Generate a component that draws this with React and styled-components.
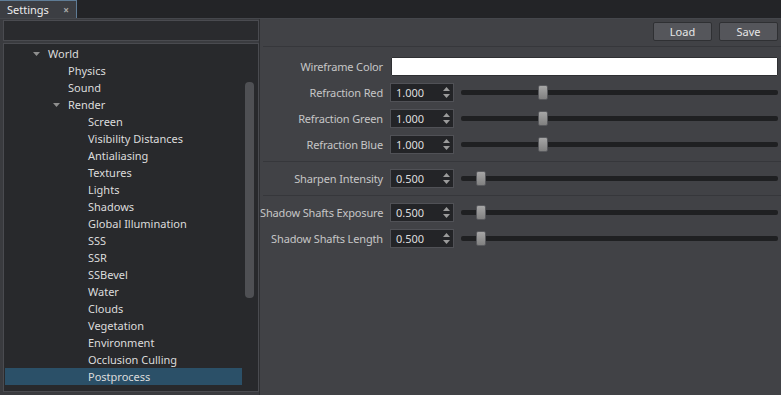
import React from "react";
import styled, { createGlobalStyle } from "styled-components";

const Global = createGlobalStyle`
  html, body { margin: 0; padding: 0; background: #3a3b3f; }
  body { font-family: "Noto Sans", "DejaVu Sans", sans-serif; font-size: 11px; }
  * { box-sizing: border-box; }
`;

const Window = styled.div`
  width: 781px;
  height: 395px;
  display: flex;
  flex-direction: column;
  background: #3a3b3f;
  overflow: hidden;
`;

const TabBar = styled.div`
  height: 18px;
  flex: none;
  display: flex;
  background: #232427;
`;

const Tab = styled.div`
  width: 77px;
  height: 18px;
  display: flex;
  align-items: center;
  justify-content: space-between;
  padding: 0 7px 0 7px;
  background: #3c3e43;
  border-top: 1px solid #5f7c96;
  border-right: 1px solid #5f7c96;
  color: #ececec;
  font-size: 11px;
`;

const Close = styled.span`
  color: #a8a8a8;
  font-size: 10px;
  font-weight: bold;
`;

const Body = styled.div`
  flex: 1;
  display: flex;
  min-height: 0;
  border-top: 1px solid #45474c;
`;

const Left = styled.div`
  width: 259px;
  flex: none;
  display: flex;
  flex-direction: column;
  gap: 2px;
  padding: 1px 0 3px 3px;
  background: #3a3b3f;
`;

const Search = styled.div`
  height: 21px;
  flex: none;
  background: #2a2b2e;
  border: 1px solid #4a4b50;
`;

const Tree = styled.div`
  flex: 1;
  position: relative;
  background: #28292c;
  border: 1px solid #4a4b50;
  padding: 1px 16px 0 1px;
`;

const Row = styled.div`
  height: 17px;
  display: flex;
  align-items: center;
  padding-left: ${(p) => p.$indent}px;
  background: ${(p) => (p.$selected ? "#2b5068" : "transparent")};
  color: #dcdcdc;
  white-space: nowrap;
`;

const Arrow = styled.span`
  width: 15px;
  display: flex;
  justify-content: flex-start;
`;

const Scroll = styled.div`
  position: absolute;
  right: 4px;
  top: 38px;
  width: 9px;
  height: 216px;
  border-radius: 4px;
  background: #4f5054;
`;

const Right = styled.div`
  flex: 1;
  display: flex;
  flex-direction: column;
  background: #414246;
  border-left: 1px solid #2e2f32;
`;

const Toolbar = styled.div`
  height: 28px;
  flex: none;
  display: flex;
  justify-content: flex-end;
  align-items: flex-start;
  gap: 7px;
  padding: 3px 3px 0 0;
  margin-left: 3px;
  border-bottom: 1px solid #36373b;
`;

const Button = styled.button`
  width: 59px;
  height: 19px;
  padding: 0;
  background: #55565b;
  border: 1px solid #2f3033;
  border-radius: 2px;
  color: #e6e6e6;
  font-family: inherit;
  font-size: 11px;
`;

const Props = styled.div`
  display: flex;
  flex-direction: column;
  gap: 7px;
  padding: 10px 3px 0 0;
`;

const PropRow = styled.div`
  height: 19px;
  display: grid;
  grid-template-columns: 123px 64px 1fr;
  column-gap: 7px;
  align-items: center;
`;

const WideRow = styled(PropRow)`
  grid-template-columns: 123px 1fr;
`;

const Label = styled.div`
  text-align: right;
  color: #c6c6c6;
  white-space: nowrap;
  letter-spacing: -0.15px;
`;

const ColorBox = styled.div`
  height: 19px;
  margin-left: 1px;
  background: #ffffff;
  border: 1px solid #2f3033;
  border-radius: 1px;
`;

const Sep = styled.div`
  height: 1px;
  margin-left: 3px;
  margin-right: -3px;
  background: #36373b;
`;

const Spin = styled.div`
  height: 19px;
  display: flex;
  align-items: center;
  justify-content: space-between;
  padding: 0 3px 0 5px;
  background: #232427;
  border: 1px solid #505156;
  color: #dedede;
`;

const Arrows = styled.div`
  display: flex;
  flex-direction: column;
  gap: 3px;
`;

const Track = styled.div`
  position: relative;
  height: 5px;
  border-radius: 2px;
  background: #1f2022;
`;

const Thumb = styled.div`
  position: absolute;
  top: -5px;
  width: 10px;
  height: 15px;
  border-radius: 2px;
  border: 1px solid #58595d;
  background: linear-gradient(#a6a6a6, #808080);
`;

const Tri = ({ down }) => (
  <svg width="7" height="4" viewBox="0 0 7 4">
    <path d={down ? "M0 0H7L3.5 4Z" : "M0 4H7L3.5 0Z"} fill="#9b9b9b" />
  </svg>
);

const treeItems = [
  { t: "World", indent: 28, arrow: true },
  { t: "Physics", indent: 63 },
  { t: "Sound", indent: 63 },
  { t: "Render", indent: 48, arrow: true },
  ...[
    "Screen",
    "Visibility Distances",
    "Antialiasing",
    "Textures",
    "Lights",
    "Shadows",
    "Global Illumination",
    "SSS",
    "SSR",
    "SSBevel",
    "Water",
    "Clouds",
    "Vegetation",
    "Environment",
    "Occlusion Culling",
  ].map((t) => ({ t, indent: 83 })),
  { t: "Postprocess", indent: 83, selected: true },
];

const SpinSlider = ({ label, value, max }) => (
  <PropRow>
    <Label>{label}</Label>
    <Spin>
      <span>{value.toFixed(3)}</span>
      <Arrows>
        <Tri />
        <Tri down />
      </Arrows>
    </Spin>
    <Track>
      <Thumb style={{ left: `calc((100% - 10px) * ${value / max})` }} />
    </Track>
  </PropRow>
);

export default function App() {
  return (
    <Window>
      <Global />
      <TabBar>
        <Tab>
          <span>Settings</span>
          <Close>×</Close>
        </Tab>
      </TabBar>
      <Body>
        <Left>
          <Search />
          <Tree>
            {treeItems.map((it) => (
              <Row key={it.t} $indent={it.indent} $selected={it.selected}>
                {it.arrow && (
                  <Arrow>
                    <svg width="7" height="4" viewBox="0 0 7 4">
                      <path d="M0 0H7L3.5 4Z" fill="#8f8f8f" />
                    </svg>
                  </Arrow>
                )}
                <span>{it.t}</span>
              </Row>
            ))}
            <Scroll />
          </Tree>
        </Left>
        <Right>
          <Toolbar>
            <Button>Load</Button>
            <Button>Save</Button>
          </Toolbar>
          <Props>
            <WideRow>
              <Label>Wireframe Color</Label>
              <ColorBox />
            </WideRow>
            <SpinSlider label="Refraction Red" value={1} max={4} />
            <SpinSlider label="Refraction Green" value={1} max={4} />
            <SpinSlider label="Refraction Blue" value={1} max={4} />
            <Sep />
            <SpinSlider label="Sharpen Intensity" value={0.5} max={10} />
            <Sep />
            <SpinSlider label="Shadow Shafts Exposure" value={0.5} max={10} />
            <SpinSlider label="Shadow Shafts Length" value={0.5} max={10} />
          </Props>
        </Right>
      </Body>
    </Window>
  );
}
